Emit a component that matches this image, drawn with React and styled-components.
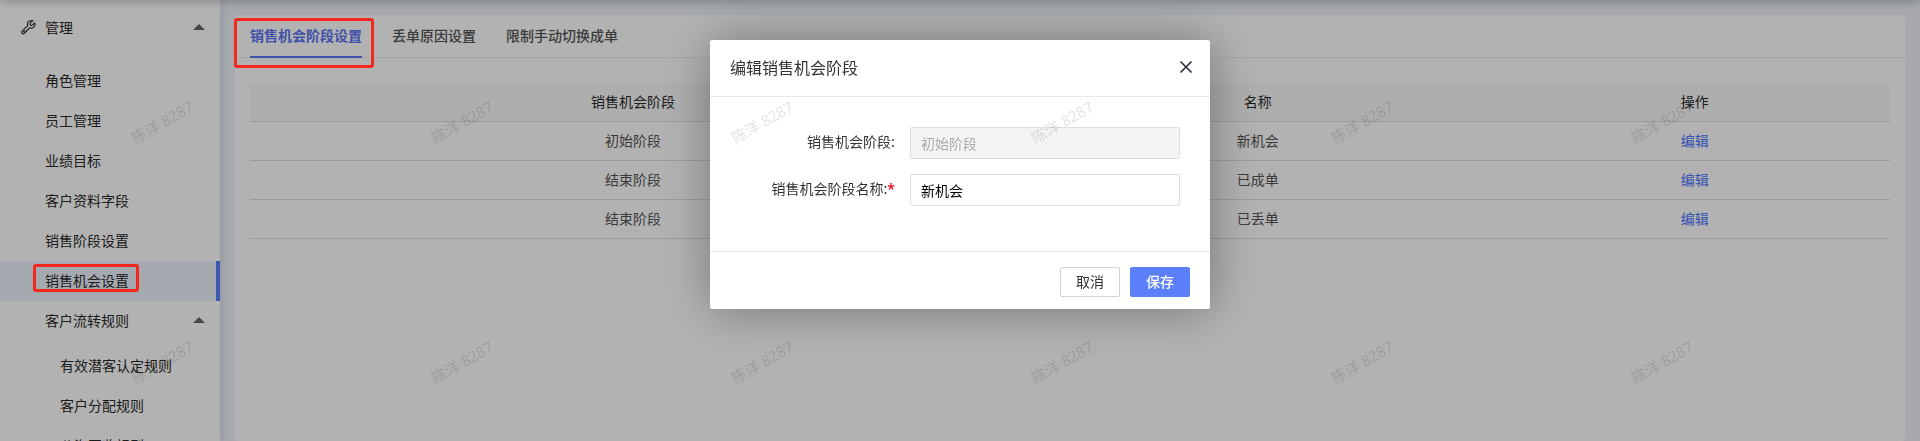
import React, { useState } from 'react';
import styled, { createGlobalStyle } from 'styled-components';

const GlobalStyle = createGlobalStyle`
  * {
    box-sizing: border-box;
  }

  body {
    margin: 0;
    overflow: hidden;
    background: #eff3f8;
    color: #333;
    font-family: 'Noto Sans CJK SC', 'Noto Sans', sans-serif;
    font-size: 14px;
    line-height: 20px;
  }

  button,
  input {
    font: inherit;
  }
`;

const Page = styled.div`
  display: flex;
  height: 100vh;
  overflow: hidden;
`;

const TopShadow = styled.div`
  position: fixed;
  top: -10px;
  left: 0;
  right: 0;
  height: 10px;
  box-shadow: 0 0 12px rgba(0, 0, 0, 0.35);
`;

const Sidebar = styled.nav`
  flex: 0 0 220px;
  background: #fff;
  box-shadow: 2px 0 8px rgba(0, 21, 41, 0.12);
`;

const MenuHeader = styled.button`
  display: flex;
  align-items: center;
  gap: 9px;
  width: 100%;
  height: ${props => props.$nested ? '40px' : '56px'};
  padding: 0 15px 2px ${props => props.$nested ? '45px' : '20px'};
  border: none;
  background: none;
  color: #2a2a2a;
  text-align: left;
  cursor: pointer;
`;

const MenuTitle = styled.span`
  flex: 1;
`;

const Caret = styled.span`
  border: 6px solid transparent;
  border-top: none;
  border-bottom-color: #666;
`;

const MenuList = styled.ul`
  list-style-type: none;
  margin: 0;
  padding: 5px 0 0;
`;

const MenuItem = styled.li``;

const MenuLink = styled.a`
  display: flex;
  align-items: center;
  height: 40px;
  padding: 0 0 2px ${props => props.$nested ? '60px' : '45px'};
  border-right: 4px solid ${props => props.$isActive ? '#5a7dfa' : 'transparent'};
  background: ${props => props.$isActive ? '#ecf2fc' : 'none'};
  color: #2a2a2a;
  text-decoration: none;
`;

/* Red frame that stays visible above the modal mask */
const Marked = styled.span`
  position: relative;

  &::after {
    content: '';
    position: absolute;
    z-index: 20;
    inset: ${props => props.$inset};
    border: 3px solid #f5281e;
    border-radius: 3px;
    pointer-events: none;
  }
`;

const Main = styled.main`
  flex: 1;
  display: flex;
  min-width: 0;
  padding: 15px 15px 0;
`;

const Card = styled.section`
  flex: 1;
  background: #fff;
  border-radius: 3px;
`;

const Tabs = styled.div`
  display: flex;
  gap: 30px;
  padding: 0 15px;
  height: 43px;
  border-bottom: 1px solid #eee;
`;

const Tab = styled.button`
  height: 43px;
  padding: 0 0 2px;
  border: none;
  border-bottom: 2px solid ${props => props.$isActive ? '#5c74f0' : 'transparent'};
  background: none;
  color: ${props => props.$isActive ? '#5c74f0' : '#555'};
  font-weight: ${props => props.$isActive ? 700 : 500};
  cursor: pointer;
`;

const TableWrap = styled.div`
  padding: 25px 15px;
`;

const Table = styled.table`
  width: 100%;
  table-layout: fixed;
  border-collapse: separate;
  border-spacing: 0;
  text-align: center;
`;

const Th = styled.th`
  width: ${props => props.$width};
  height: 39px;
  padding: 0 0 2px;
  border-bottom: 1px solid #dcdfe2;
  background: #f9f9f9;
  color: #2a2a2a;
  font-weight: 400;
`;

const Td = styled.td`
  height: 39px;
  padding: 0 0 2px;
  border-bottom: 1px solid #dcdfe2;
  color: #555;
`;

const EditLink = styled.a`
  color: #5074ff;
  text-decoration: none;
`;

const Mask = styled.div`
  position: fixed;
  inset: 0;
  z-index: 10;
  display: flex;
  justify-content: center;
  align-items: flex-start;
  padding-top: 40px;
  background: rgba(0, 0, 0, 0.3);
`;

const Modal = styled.form`
  width: 500px;
  background: #fff;
  border-radius: 2px;
  box-shadow: 1px 1px 50px rgba(0, 0, 0, 0.35);
`;

const ModalHeader = styled.header`
  display: flex;
  justify-content: space-between;
  align-items: center;
  height: 57px;
  padding: 0 14px 2px 20px;
  border-bottom: 1px solid #e8e8e8;
`;

const ModalTitle = styled.h2`
  margin: 0;
  font-size: 16px;
  font-weight: 400;
`;

const CloseButton = styled.button`
  display: flex;
  padding: 3px;
  border: none;
  background: none;
  color: #2a2a33;
  cursor: pointer;
`;

const ModalBody = styled.div`
  display: flex;
  flex-direction: column;
  gap: 15px;
  padding: 30px 30px 45px;
`;

const Field = styled.div`
  display: flex;
  align-items: center;
  gap: 15px;
`;

const Label = styled.label`
  flex: 1;
  padding-bottom: 4px;
  text-align: right;
`;

const Required = styled.span`
  color: #e60012;
  font-family: 'Open Sans', sans-serif;
  font-size: 14px;
  font-weight: 600;
`;

const Input = styled.input`
  width: 270px;
  height: 32px;
  padding: 0 10px;
  border: 1px solid #ddd;
  border-radius: 2px;
  outline: none;
  background: #fff;
  color: #000;

  &:disabled {
    background: #f4f4f6;
    color: #aaa;
  }
`;

const ModalFooter = styled.footer`
  display: flex;
  justify-content: flex-end;
  gap: 10px;
  padding: 15px 20px 12px;
  border-top: 1px solid #e8e8e8;
`;

const Button = styled.button`
  width: 60px;
  height: 30px;
  padding: 0 0 2px;
  border: 1px solid ${props => props.$primary ? '#5c7ffc' : '#d4d4d4'};
  border-radius: 2px;
  background: ${props => props.$primary ? '#5c7ffc' : '#fff'};
  color: ${props => props.$primary ? '#fff' : '#333'};
  font-weight: ${props => props.$primary ? 500 : 400};
  cursor: pointer;
`;

const WatermarkLayer = styled.div`
  position: fixed;
  inset: 0;
  z-index: 30;
  display: grid;
  grid-template-columns: repeat(auto-fill, 300px);
  grid-auto-rows: 240px;
  place-items: center;
  padding: 2px 0 0 12px;
  overflow: hidden;
  pointer-events: none;
`;

const Watermark = styled.span`
  color: rgba(0, 0, 0, 0.12);
  font-family: 'Open Sans', 'Noto Sans CJK SC', sans-serif;
  font-size: 15px;
  transform: rotate(-30deg);
`;

const menuItems = [
  '角色管理',
  '员工管理',
  '业绩目标',
  '客户资料字段',
  '销售阶段设置',
  '销售机会设置',
];

const ruleItems = ['有效潜客认定规则', '客户分配规则', '公海回收规则'];

const tabs = ['销售机会阶段设置', '丢单原因设置', '限制手动切换成单'];

const stages = [
  { stage: '初始阶段', name: '新机会' },
  { stage: '结束阶段', name: '已成单' },
  { stage: '结束阶段', name: '已丢单' },
];

const WrenchIcon = () => (
  <svg width="16" height="16" viewBox="0 0 16 16" fill="none" stroke="#333" strokeWidth="1.2" strokeLinejoin="round">
    <path d="M12.6 1.8 10 4.4l.3 1.7 1.7.3 2.6-2.5c.8 2-.1 4-1.8 4.8-1 .5-2 .4-2.9.1l-5.6 5.5c-.6.6-1.6.6-2.2 0s-.6-1.6 0-2.2l5.6-5.500c-.6-2 .2-3.800 1.700-4.600 1-.5 2.200-.5 3.500-.2Z" />
    <path d="M3.2 13.1 5 11.3" />
  </svg>
);

const CloseIcon = () => (
  <svg width="14" height="14" viewBox="0 0 14 14" stroke="currentColor" strokeWidth="1.6">
    <path d="M1.500 1.500 12.500 12.500M12.500 1.500 1.500 12.500" />
  </svg>
);

const App = () => {
  const [activeTab, setActiveTab] = useState(tabs[0]);
  const [isOpen, setIsOpen] = useState(true);
  const [name, setName] = useState('新机会');

  return (
    <>
      <GlobalStyle />
      <Page>
        <Sidebar>
          <MenuHeader type="button">
            <WrenchIcon />
            <MenuTitle>管理</MenuTitle>
            <Caret />
          </MenuHeader>
          <MenuList>
            {menuItems.map((item) => {
              const isActive = item === '销售机会设置';
              return (
                <MenuItem key={item}>
                  <MenuLink href="#" $isActive={isActive}>
                    {isActive ? <Marked $inset="-6px -10px -2px -12px">{item}</Marked> : item}
                  </MenuLink>
                </MenuItem>
              );
            })}
            <MenuItem>
              <MenuHeader type="button" $nested>
                <MenuTitle>客户流转规则</MenuTitle>
                <Caret />
              </MenuHeader>
              <MenuList>
                {ruleItems.map((item) => (
                  <MenuItem key={item}>
                    <MenuLink href="#" $nested>{item}</MenuLink>
                  </MenuItem>
                ))}
              </MenuList>
            </MenuItem>
          </MenuList>
        </Sidebar>
        <Main>
          <Card>
            <Tabs role="tablist">
              {tabs.map((tab, index) => (
                <Tab
                  key={tab}
                  type="button"
                  role="tab"
                  aria-selected={activeTab === tab}
                  $isActive={activeTab === tab}
                  onClick={() => setActiveTab(tab)}
                >
                  {index === 0 ? <Marked $inset="-7px -12px -23px -16px">{tab}</Marked> : tab}
                </Tab>
              ))}
            </Tabs>
            <TableWrap>
              <Table>
                <thead>
                  <tr>
                    <Th $width="46.7%">销售机会阶段</Th>
                    <Th $width="29.5%">名称</Th>
                    <Th $width="23.8%">操作</Th>
                  </tr>
                </thead>
                <tbody>
                  {stages.map((row) => (
                    <tr key={row.name}>
                      <Td>{row.stage}</Td>
                      <Td>{row.name}</Td>
                      <Td>
                        <EditLink href="#" onClick={() => setIsOpen(true)}>编辑</EditLink>
                      </Td>
                    </tr>
                  ))}
                </tbody>
              </Table>
            </TableWrap>
          </Card>
        </Main>
      </Page>
      <TopShadow />
      {isOpen && (
        <Mask>
          <Modal role="dialog" aria-labelledby="modal-title" onSubmit={(e) => e.preventDefault()}>
            <ModalHeader>
              <ModalTitle id="modal-title">编辑销售机会阶段</ModalTitle>
              <CloseButton type="button" aria-label="关闭" onClick={() => setIsOpen(false)}>
                <CloseIcon />
              </CloseButton>
            </ModalHeader>
            <ModalBody>
              <Field>
                <Label htmlFor="stage">销售机会阶段:</Label>
                <Input id="stage" value="初始阶段" disabled />
              </Field>
              <Field>
                <Label htmlFor="stage-name">
                  销售机会阶段名称:<Required>*</Required>
                </Label>
                <Input id="stage-name" value={name} onChange={(e) => setName(e.target.value)} />
              </Field>
            </ModalBody>
            <ModalFooter>
              <Button type="button" onClick={() => setIsOpen(false)}>取消</Button>
              <Button type="submit" $primary>保存</Button>
            </ModalFooter>
          </Modal>
        </Mask>
      )}
      <WatermarkLayer aria-hidden="true">
        {Array.from({ length: 12 }, (_, i) => (
          <Watermark key={i}>陈洋 8287</Watermark>
        ))}
      </WatermarkLayer>
    </>
  );
};

export default App;
